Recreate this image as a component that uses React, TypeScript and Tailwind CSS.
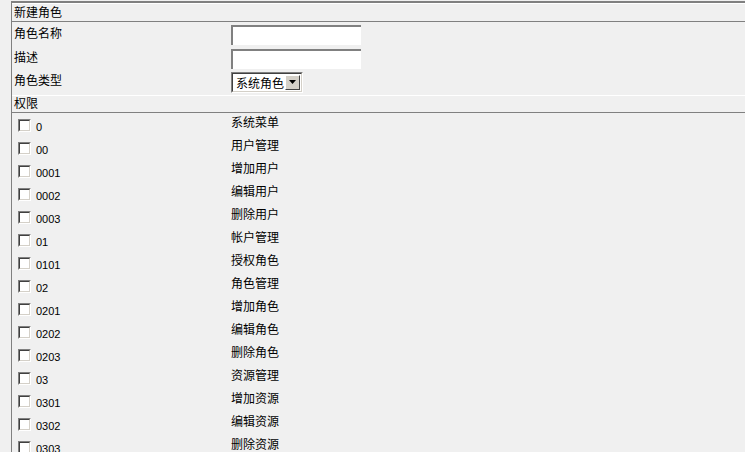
const perms: [string, string][] = [
  ["0", "系统菜单"],
  ["00", "用户管理"],
  ["0001", "增加用户"],
  ["0002", "编辑用户"],
  ["0003", "删除用户"],
  ["01", "帐户管理"],
  ["0101", "授权角色"],
  ["02", "角色管理"],
  ["0201", "增加角色"],
  ["0202", "编辑角色"],
  ["0203", "删除角色"],
  ["03", "资源管理"],
  ["0301", "增加资源"],
  ["0302", "编辑资源"],
  ["0303", "删除资源"],
];

function Checkbox() {
  return (
    <div className="w-[13px] h-[13px] shrink-0 border border-t-[#808080] border-l-[#808080] border-b-white border-r-white">
      <div className="w-full h-full bg-white border border-t-[#404040] border-l-[#404040] border-b-[#d4d0c8] border-r-[#d4d0c8]" />
    </div>
  );
}

function TextInput() {
  return (
    <div className="w-[130px] h-[20px] bg-white border-t-2 border-l-2 border-[#808080]" />
  );
}

function Select() {
  return (
    <div className="w-[72px] h-[21px] flex items-stretch bg-white border border-t-[#808080] border-l-[#808080] border-b-white border-r-white">
      <div className="flex-1 flex items-stretch border border-t-[#404040] border-l-[#404040] border-b-[#d4d0c8] border-r-[#d4d0c8]">
        <span className="flex-1 pl-[3px] leading-[17px] text-black">系统角色</span>
        <div className="w-[15px] my-px mr-px bg-[#d4d0c8] border border-t-white border-l-white border-b-[#404040] border-r-[#404040] flex items-center justify-center">
          <svg width="7" height="4" viewBox="0 0 7 4">
            <path d="M0 0h7L3.5 4z" fill="#000" />
          </svg>
        </div>
      </div>
    </div>
  );
}

function SectionHeader({ title, h }: { title: string; h: string }) {
  return (
    <div className={`border-t border-b border-t-white border-b-[#808080] pl-[2px] pb-[2px] flex items-center ${h}`}>
      {title}
    </div>
  );
}

export default function App() {
  return (
    <div
      className="h-[452px] overflow-hidden bg-[#f0f0f0] pl-[11px] pt-px text-[12px] text-black"
      style={{ fontFamily: '"Noto Sans CJK SC", sans-serif' }}
    >
      <div className="border-l border-t-2 border-[#808080] min-h-[500px]">
        {/* 新建角色 */}
        <SectionHeader title="新建角色" h="h-[19px]" />

        {/* form rows */}
        <div className="flex items-center h-[25px]">
          <div className="w-[219px] pl-[2px] pb-[4px]">角色名称</div>
          <TextInput />
        </div>
        <div className="flex items-center h-[23px]">
          <div className="w-[219px] pl-[2px] pb-[4px]">描述</div>
          <TextInput />
        </div>
        <div className="flex items-center h-[25px]">
          <div className="w-[219px] pl-[2px] pb-[5px]">角色类型</div>
          <div className="pb-[1px]">
            <Select />
          </div>
        </div>

        {/* 权限 */}
        <SectionHeader title="权限" h="h-[18px]" />

        <div className="flex flex-col">
          {perms.map(([code, name]) => (
            <div key={code} className="flex items-start h-[23px]">
              <div className="w-[219px] flex items-start pl-[6px] pt-[6px]">
                <Checkbox />
                <span
                  className="ml-[5px] mt-[3px] text-[11px] leading-[11px]"
                  style={{ fontFamily: '"Liberation Sans", sans-serif' }}
                >
                  {code}
                </span>
              </div>
              <div className="pt-[2px] leading-[14px]">{name}</div>
            </div>
          ))}
        </div>
      </div>
    </div>
  );
}
